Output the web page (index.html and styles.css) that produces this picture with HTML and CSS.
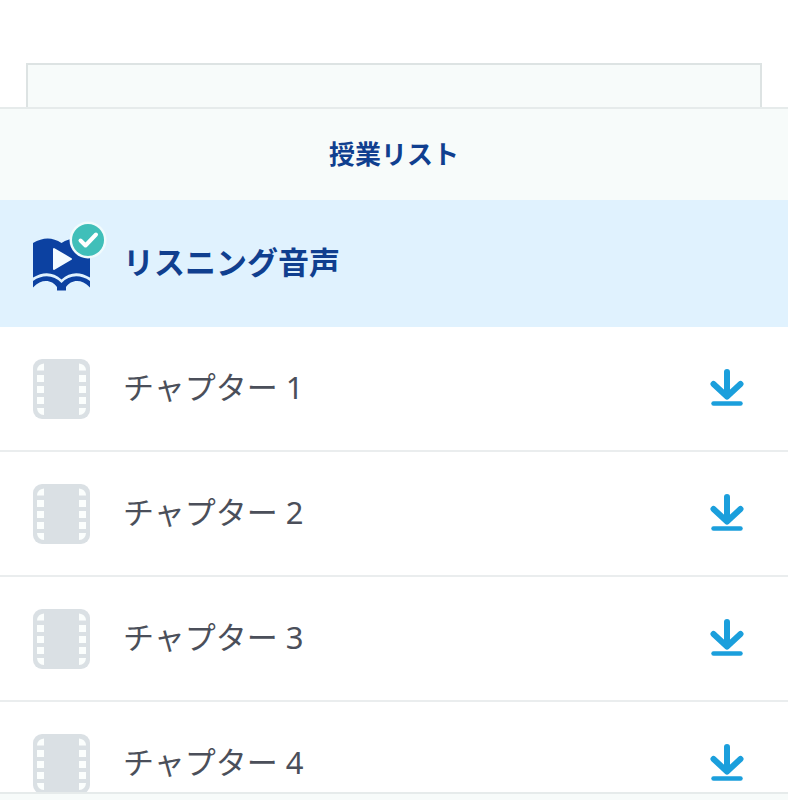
FILE: index.html
```html
<!DOCTYPE html>
<html lang="ja">
    <head>
        <meta charset="UTF-8">
        <meta name="viewport" content="width=device-width, initial-scale=1.0">
        <title>授業リスト</title>
        <link rel="stylesheet" href="styles.css">
    </head>
    <body>
        <!-- Shared icons -->
        <svg class="sprite" aria-hidden="true">
            <symbol id="film" viewBox="0 0 57 60">
                <rect width="57" height="60" rx="9" fill="#dae0e4"/>
                <g fill="#fbfefd">
                    <path d="M4 11.500 Q4.500 5 11 4.500 V11.500 Z"/>
                    <rect x="4" y="16" width="7" height="7"/>
                    <rect x="4" y="27" width="7" height="7"/>
                    <rect x="4" y="38" width="7" height="7"/>
                    <path d="M4 49 H11 V56 Q4.500 55.500 4 49 Z"/>
                    <path d="M46 4.500 Q52.500 5 53 11.500 H46 Z"/>
                    <rect x="46" y="16" width="7" height="7"/>
                    <rect x="46" y="27" width="7" height="7"/>
                    <rect x="46" y="38" width="7" height="7"/>
                    <path d="M46 49 H53 Q52.500 55.500 46 56 Z"/>
                </g>
            </symbol>
            <symbol id="download" viewBox="0 0 34 38">
                <g fill="none" stroke="#1b9fdc" stroke-linecap="round" stroke-linejoin="round">
                    <path d="M17 4 V28 M3.500 16 L17 28.500 L30.500 16" stroke-width="6"/>
                    <path d="M3.500 35.500 H30.500" stroke-width="4.500"/>
                </g>
            </symbol>
        </svg>

        <div class="app">
            <div class="player"></div>
            <header class="header">
                <h1>授業リスト</h1>
            </header>
            <ul class="lessons">
                <li class="lesson active">
                    <span class="thumb">
                        <svg class="book" viewBox="0 0 57 54" aria-hidden="true">
                            <path fill="#0c41a1" d="M0 6 Q15 -3 28.500 6 Q42 -3 57 6 V40.500 Q41 31 28.500 42.500 Q16 31 0 40.500 Z"/>
                            <path fill="#0c41a1" d="M0 44 C10 37 21 38 28.500 46 C36 38 47 37 57 44 V50.500 C48 41 38 43 33 50 V53.500 H24 V50 C19 43 9 41 0 50.500 Z"/>
                            <path fill="#f3fbff" stroke="#f3fbff" stroke-width="2" stroke-linejoin="round" d="M21 12 V32 L38 22 Z"/>
                        </svg>
                        <svg class="badge" viewBox="0 0 38 38" aria-hidden="true">
                            <circle cx="19" cy="19" r="18.500" fill="#f1fbfd"/>
                            <circle cx="19" cy="19" r="16" fill="#40bfb9"/>
                            <path d="M11.500 19.500 L16.500 24.500 L27 13.500" fill="none" stroke="#fff" stroke-width="4" stroke-linecap="round" stroke-linejoin="round"/>
                        </svg>
                    </span>
                    <a href="#listening" class="name">リスニング音声</a>
                </li>
                <li class="lesson">
                    <svg class="film" aria-hidden="true"><use href="#film"/></svg>
                    <a href="#chapter1" class="name">チャプター 1</a>
                    <button type="button" class="download" aria-label="ダウンロード"><svg><use href="#download"/></svg></button>
                </li>
                <li class="lesson">
                    <svg class="film" aria-hidden="true"><use href="#film"/></svg>
                    <a href="#chapter2" class="name">チャプター 2</a>
                    <button type="button" class="download" aria-label="ダウンロード"><svg><use href="#download"/></svg></button>
                </li>
                <li class="lesson">
                    <svg class="film" aria-hidden="true"><use href="#film"/></svg>
                    <a href="#chapter3" class="name">チャプター 3</a>
                    <button type="button" class="download" aria-label="ダウンロード"><svg><use href="#download"/></svg></button>
                </li>
                <li class="lesson">
                    <svg class="film" aria-hidden="true"><use href="#film"/></svg>
                    <a href="#chapter4" class="name">チャプター 4</a>
                    <button type="button" class="download" aria-label="ダウンロード"><svg><use href="#download"/></svg></button>
                </li>
            </ul>
            <footer class="footer"></footer>
        </div>
    </body>
</html>
```

FILE: styles.css
```css
/* General Styles */
* {
    box-sizing: border-box;
}

body {
    margin: 0;
    background-color: white;
    color: #4b4f5a;
    font-family: "Noto Sans", "Noto Sans CJK JP", sans-serif;
}

.sprite {
    display: none;
}

.app {
    display: flex;
    flex-direction: column;
    height: 100vh;
    padding-top: 63px;
}

/* Bottom edge of the panel behind the list */
.player {
    flex: none;
    height: 44px;
    margin: 0 26px;
    background-color: #f7fbfa;
    border: 2px solid #dde3e3;
    border-bottom: none;
}

.header {
    flex: none;
    padding: 27px 16px;
    background-color: #f7fbfa;
    border-top: 2px solid #e6ebeb;
    text-align: center;
}

h1 {
    margin: 0;
    color: #103f8f;
    font-size: 26px;
    line-height: 37px;
    font-weight: 700;
}

/* Lesson list */
.lessons {
    flex: 1;
    min-height: 0;
    margin: 0;
    padding: 0;
    overflow: hidden;
    list-style: none;
}

.lesson {
    display: flex;
    align-items: center;
    gap: 33px;
    height: 125px;
    padding: 0 44px 0 33px;
    border-bottom: 2px solid #eaedee;
}

.lesson.active {
    height: 127px;
    background-color: #e0f2fe;
    border-bottom: none;
}

.name {
    flex: 1;
    padding-bottom: 4px;
    color: inherit;
    font-size: 31px;
    line-height: 44px;
    text-decoration: none;
}

.active .name {
    color: #103f8f;
    font-weight: 700;
}

.thumb {
    position: relative;
    width: 57px;
    height: 54px;
}

.book {
    display: block;
    width: 57px;
    height: 54px;
}

.badge {
    position: absolute;
    top: -16px;
    left: 36px;
    width: 38px;
    height: 38px;
}

.film {
    width: 57px;
    height: 60px;
}

.download {
    padding: 0 0 4px;
    border: none;
    background: none;
    cursor: pointer;
}

.download svg {
    display: block;
    width: 34px;
    height: 38px;
}

.footer {
    flex: none;
    height: 8px;
    background-color: #f7fbfa;
    border-top: 2px solid #e6ebeb;
}
```
